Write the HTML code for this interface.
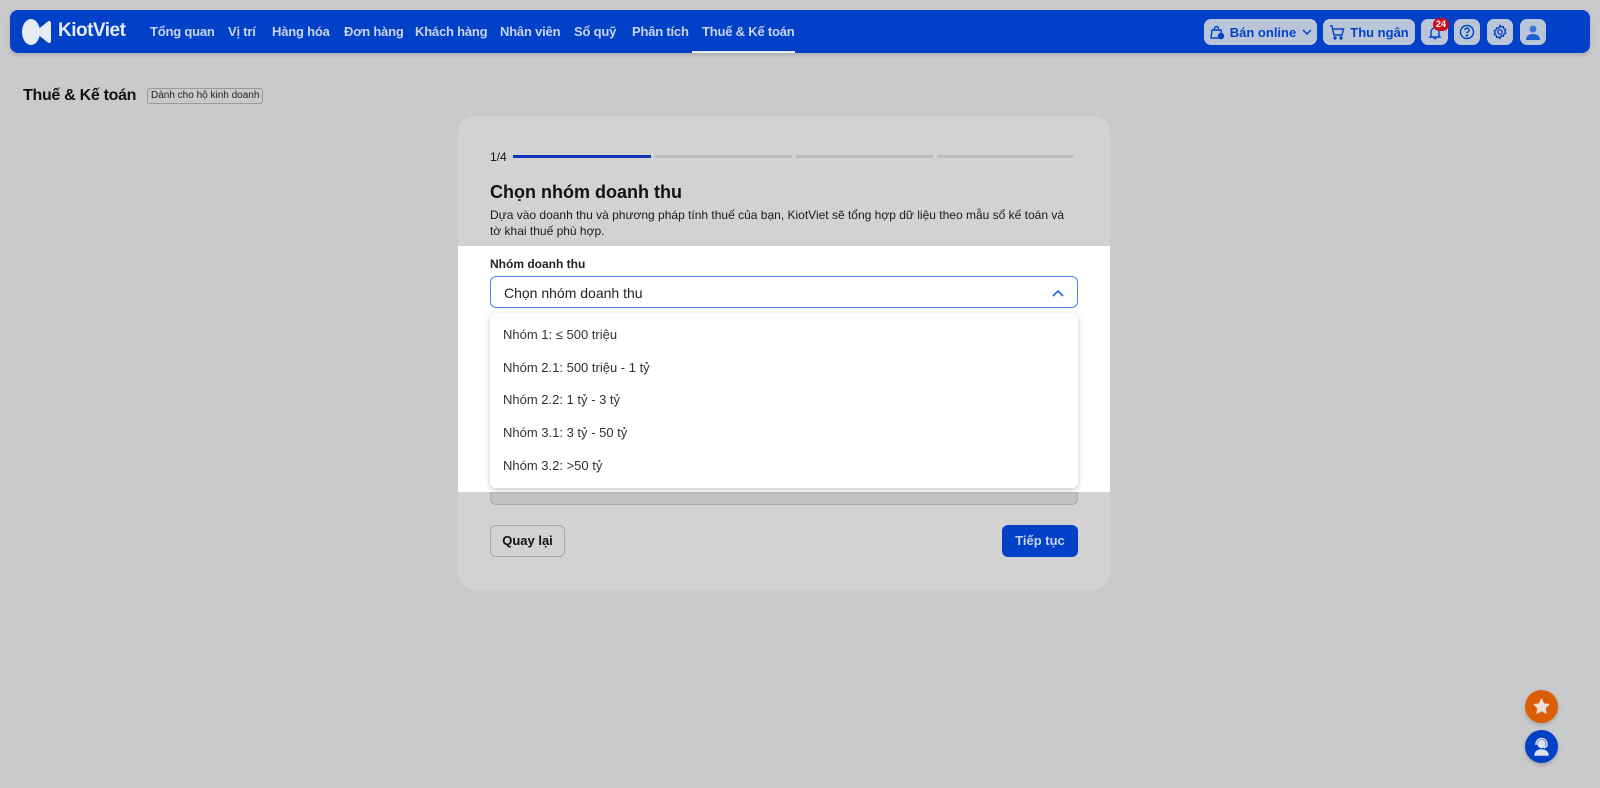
<!DOCTYPE html>
<html><head><meta charset="utf-8"><style>
*{box-sizing:border-box;margin:0;padding:0}
body{width:1600px;height:788px;background:#c9cacc;font-family:"Liberation Sans",Arial,sans-serif;position:relative;overflow:hidden;color:#111}
.nav{position:absolute;left:10px;top:10px;width:1580px;height:43px;background:#0041c8;border-radius:8px;box-shadow:0 2px 4px rgba(0,0,0,.15)}
.nav .m{position:absolute;top:14px;color:#c9d3ea;font-size:13px;font-weight:bold;white-space:nowrap;letter-spacing:-0.2px}
.logo{position:absolute;left:12px;top:8px}
.btn{position:absolute;top:9px;height:26px;background:#bac6d8;border-radius:7px;color:#0041c8;font-size:13px;font-weight:bold;display:flex;align-items:center;justify-content:center}
.card{position:absolute;left:458px;top:116px;width:652px;height:474px;background:#d2d2d2;border-radius:16px}
.band{position:absolute;left:458px;top:246px;width:652px;height:246px;background:#fff}
.abs{position:absolute;white-space:nowrap}
.item{position:absolute;left:13px;font-size:13px;color:#333}
</style></head><body>
<div class="nav">
 <svg class="logo" width="30" height="28" viewBox="0 0 30 28"><ellipse cx="9" cy="14" rx="9" ry="13" fill="#e8ecf5"/><path d="M16 14 L27 5 L27 23 Z" fill="#e8ecf5" stroke="#e8ecf5" stroke-width="4" stroke-linejoin="round"/></svg>
 <div class="m" style="left:48px;top:10px;font-size:19px;color:#e6eaf3;font-weight:bold;letter-spacing:-0.5px">KiotViet</div>
 <div class="m" style="left:140px">Tổng quan</div>
 <div class="m" style="left:218px">Vị trí</div>
 <div class="m" style="left:262px">Hàng hóa</div>
 <div class="m" style="left:334px">Đơn hàng</div>
 <div class="m" style="left:405px">Khách hàng</div>
 <div class="m" style="left:490px">Nhân viên</div>
 <div class="m" style="left:564px">Sổ quỹ</div>
 <div class="m" style="left:622px">Phân tích</div>
 <div class="m" style="left:692px">Thuế &amp; Kế toán</div>
 <div style="position:absolute;left:682px;top:41px;width:103px;height:2px;background:#e8ecf5"></div>
 <div class="btn" style="left:1194px;width:113px">
  <svg width="16" height="16" viewBox="0 0 16 16" fill="none" stroke="#0041c8" stroke-width="1.4"><path d="M3 6h9l1 8H2z"/><path d="M5.5 6V4.5a2 2 0 0 1 4 0V6"/><circle cx="12" cy="12" r="2.5" fill="#0041c8"/></svg>
  <span style="margin:0 6px 0 5px">Bán online</span>
  <svg width="10" height="6" viewBox="0 0 10 6" fill="none" stroke="#0041c8" stroke-width="1.5"><path d="M1 1l4 4 4-4"/></svg></div>
 <div class="btn" style="left:1313px;width:92px">
  <svg width="16" height="16" viewBox="0 0 16 16" fill="none" stroke="#0041c8" stroke-width="1.4"><path d="M1 2h2l2 9h8l1.5-6H4"/><circle cx="6" cy="14" r="1"/><circle cx="12" cy="14" r="1"/></svg>
  <span style="margin-left:5px">Thu ngân</span></div>
 <div class="btn" style="left:1411px;width:27px"><svg width="14" height="15" viewBox="0 0 14 15" fill="none" stroke="#0041c8" stroke-width="1.4"><path d="M3 11V7a4 4 0 0 1 8 0v4l1 1H2z"/><path d="M5.5 13.5h3"/></svg></div>
 <div style="position:absolute;left:1423px;top:8px;width:16px;height:13px;border-radius:7px;background:#c80e1c;color:#fff;font-size:9px;font-weight:bold;text-align:center;line-height:13px">24</div>
 <div class="btn" style="left:1444px;width:26px"><svg width="16" height="16" viewBox="0 0 16 16" fill="none" stroke="#0041c8" stroke-width="1.4"><circle cx="8" cy="8" r="6.5"/><path d="M6 6.2a2 2 0 1 1 2.6 1.9c-.5.2-.6.6-.6 1.2"/><circle cx="8" cy="11.5" r=".5" fill="#0041c8"/></svg></div>
 <div class="btn" style="left:1477px;width:26px"><svg width="16" height="16" viewBox="0 0 16 16" fill="none" stroke="#0041c8" stroke-width="1.4"><circle cx="8" cy="8" r="2.2"/><path d="M8 1.5l1.3 1.6 2-.5.5 2 1.9.9-.8 1.9.8 1.9-1.9.9-.5 2-2-.5L8 14.5l-1.3-1.6-2 .5-.5-2-1.9-.9.8-1.9-.8-1.9 1.9-.9.5-2 2 .5z"/></svg></div>
 <div class="btn" style="left:1510px;width:26px"><svg width="18" height="18" viewBox="0 0 18 18"><circle cx="9" cy="6" r="3.5" fill="#3a74d8"/><path d="M2 17c0-4 3-6 7-6s7 2 7 6z" fill="#1f5ed0"/></svg></div>
</div>

<div class="abs" style="left:23px;top:87px;font-size:16px;font-weight:bold;letter-spacing:-0.3px">Thuế &amp; Kế toán</div>
<div class="abs" style="left:147px;top:88px;height:16px;padding:0 3px;border:1px solid #999;border-radius:3px;font-size:10px;line-height:14px;color:#222">Dành cho hộ kinh doanh</div>

<div class="card"></div>
<div class="abs" style="left:490px;top:150px;font-size:12px">1/4</div>
<div class="abs" style="left:513px;top:155px;width:138px;height:3px;background:#0f35b8"></div>
<div class="abs" style="left:655px;top:155px;width:137px;height:3px;background:#bdbdbd"></div>
<div class="abs" style="left:796px;top:155px;width:137px;height:3px;background:#bdbdbd"></div>
<div class="abs" style="left:937px;top:155px;width:137px;height:3px;background:#bdbdbd"></div>
<div class="abs" style="left:490px;top:182px;font-size:18px;font-weight:bold">Chọn nhóm doanh thu</div>
<div class="abs" style="left:490px;top:207px;font-size:12px;line-height:16px;color:#1a1a1a">Dựa vào doanh thu và phương pháp tính thuế của bạn, KiotViet sẽ tổng hợp dữ liệu theo mẫu sổ kế toán và<br>tờ khai thuế phù hợp.</div>

<div class="abs" style="left:490px;top:488px;width:588px;height:17px;border:1px solid #aaa;border-top:none;border-radius:0 0 6px 6px;background:#c2c2c2"></div>
<div class="band"></div>
<div class="abs" style="left:490px;top:257px;font-size:12px;font-weight:bold;color:#222">Nhóm doanh thu</div>
<div class="abs" style="left:490px;top:276px;width:588px;height:32px;border:1px solid #4f86e8;border-radius:6px;background:#fff">
 <div class="abs" style="left:13px;top:8px;font-size:14px;color:#222">Chọn nhóm doanh thu</div>
 <svg class="abs" style="left:561px;top:12px" width="12" height="8" viewBox="0 0 12 8" fill="none" stroke="#2a62d8" stroke-width="1.6"><path d="M1 7l5-5 5 5"/></svg>
</div>
<div class="abs" style="left:490px;top:313px;width:588px;height:175px;background:#fff;border-radius:6px;box-shadow:0 2px 6px rgba(0,0,0,.22)">
 <div class="item" style="top:14px">Nhóm 1: ≤ 500 triệu</div>
 <div class="item" style="top:47px">Nhóm 2.1: 500 triệu - 1 tỷ</div>
 <div class="item" style="top:79px">Nhóm 2.2: 1 tỷ - 3 tỷ</div>
 <div class="item" style="top:112px">Nhóm 3.1: 3 tỷ - 50 tỷ</div>
 <div class="item" style="top:145px">Nhóm 3.2: &gt;50 tỷ</div>
</div>

<div class="abs" style="left:490px;top:525px;width:75px;height:32px;border:1px solid #a8a8a8;border-radius:6px;font-size:13px;font-weight:bold;text-align:center;line-height:30px">Quay lại</div>
<div class="abs" style="left:1002px;top:525px;width:76px;height:32px;background:#0041c8;border-radius:6px;font-size:13px;font-weight:bold;color:#c9d3ea;text-align:center;line-height:32px">Tiếp tục</div>

<div class="abs" style="left:1525px;top:690px;width:33px;height:33px;border-radius:50%;background:#dc5d06;box-shadow:0 2px 4px rgba(0,0,0,.2)"><svg style="position:absolute;left:8px;top:8px" width="17" height="17" viewBox="0 0 24 24"><path d="M12 2l3 6.5 7 .8-5.2 4.8 1.4 7L12 17.6 5.8 21.1l1.4-7L2 9.3l7-.8z" fill="#e9e1da" stroke="#e9e1da" stroke-width="2" stroke-linejoin="round"/></svg></div>
<div class="abs" style="left:1525px;top:730px;width:33px;height:33px;border-radius:50%;background:#0041c8;box-shadow:0 2px 4px rgba(0,0,0,.2)"><svg style="position:absolute;left:8px;top:7px" width="17" height="19" viewBox="0 0 17 19" fill="none" stroke="#dde3f0" stroke-width="1.4"><circle cx="8.5" cy="7" r="3.5" fill="#dde3f0"/><path d="M3 8V7a5.5 5.5 0 0 1 11 0v2l-3 2"/><path d="M2 18c0-3 3-5 6.5-5s6.5 2 6.5 5z" fill="#dde3f0"/></svg></div>
</body></html>
